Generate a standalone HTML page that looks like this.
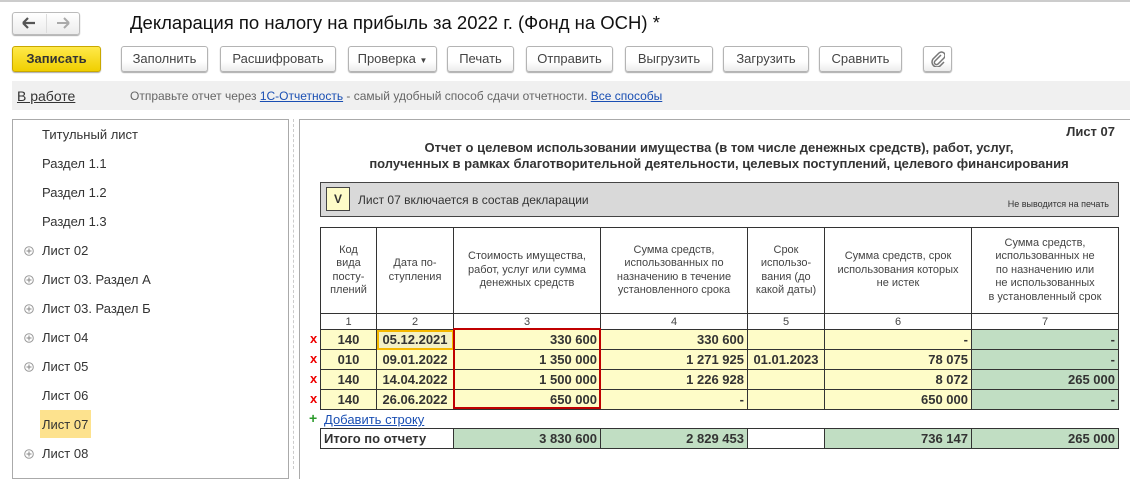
<!DOCTYPE html>
<html><head><meta charset="utf-8"><style>
*{box-sizing:border-box;margin:0;padding:0}
body{width:1130px;height:466px;overflow:hidden;background:#fff;font-family:"Liberation Sans",Arial,sans-serif;color:#333;position:relative;font-size:13px}
.a{position:absolute}
.btn{position:absolute;top:46px;height:26px;border:1px solid #b4b4b4;border-radius:3px;background:linear-gradient(#fff 60%,#ececec);box-shadow:0 1px 1px #aaa;font-size:13px;color:#444;text-align:center;line-height:24px}
.li{position:absolute;left:42px;font-size:13px;color:#333}
.pl{position:absolute;left:24px;width:10px;height:10px}
table{position:absolute;left:320px;top:227px;border-collapse:collapse;font-size:11px}
td{border:1px solid #333;text-align:center;padding:0 3px;color:#444}
.h td{height:86px;vertical-align:middle;line-height:13.5px}
.n td{height:16px}
.d td{height:20px;background:#fefcc8;font-weight:bold;font-size:13px;color:#333}
.d td.r,.t td.r{text-align:right}
.d td.g,.t td.g{background:#c1dec3}
.t td{height:20px;font-weight:bold;font-size:13px;color:#333}
.x{position:absolute;left:310px;color:#e00;font-weight:bold;font-size:13px}
</style></head><body>
<div class="a" style="left:0;top:0;width:1130px;height:2px;background:#ccc"></div>
<div class="a" style="left:12px;top:12px;width:68px;height:23px;border:1px solid #bbb;border-radius:3px;background:linear-gradient(#fff,#ececec);box-shadow:0 1px 1px #aaa"></div>
<div class="a" style="left:46px;top:14px;width:1px;height:19px;background:#ddd"></div>
<svg class="a" style="left:22px;top:17px" width="14" height="12"><path d="M1 6H13M1 6L6 1M1 6L6 11" stroke="#555" stroke-width="2.2" fill="none"/></svg>
<svg class="a" style="left:56px;top:17px" width="14" height="12"><path d="M1 6H13M13 6L8 1M13 6L8 11" stroke="#aaa" stroke-width="2" fill="none"/></svg>
<div class="a" style="left:130px;top:12px;font-size:18.5px;color:#111">Декларация по налогу на прибыль за 2022 г. (Фонд на ОСН) *</div>
<div class="btn" style="left:12px;width:89px;background:linear-gradient(#ffe94a,#f0cf00);border-color:#c9a800;color:#333;font-weight:bold">Записать</div>
<div class="btn" style="left:121px;width:87px">Заполнить</div>
<div class="btn" style="left:220px;width:116px">Расшифровать</div>
<div class="btn" style="left:348px;width:89px">Проверка <span style="font-size:8px">▼</span></div>
<div class="btn" style="left:447px;width:67px">Печать</div>
<div class="btn" style="left:526px;width:87px">Отправить</div>
<div class="btn" style="left:625px;width:88px">Выгрузить</div>
<div class="btn" style="left:723px;width:86px">Загрузить</div>
<div class="btn" style="left:819px;width:83px">Сравнить</div>
<div class="btn" style="left:923px;width:29px"><svg width="14" height="16" style="margin-top:4px"><path d="M10 4L4 10a2 2 0 0 0 3 3l6-6a3.5 3.5 0 0 0-5-5L2 8a5 5 0 0 0 7 7l4-4" stroke="#777" stroke-width="1.5" fill="none"/></svg></div>
<div class="a" style="left:12px;top:81px;width:1118px;height:29px;background:#f0f0f0"></div>
<div class="a" style="left:17px;top:88px;font-size:14px;color:#333;text-decoration:underline">В работе</div>
<div class="a" style="left:130px;top:89px;font-size:12px;color:#666">Отправьте отчет через <span style="color:#1a4fb3;text-decoration:underline">1С-Отчетность</span> - самый удобный способ сдачи отчетности. <span style="color:#1a4fb3;text-decoration:underline">Все способы</span></div>
<div class="a" style="left:12px;top:119px;width:277px;height:360px;border:1px solid #aaa"></div>
<div class="a" style="left:293px;top:119px;width:0;height:350px;border-left:1px dashed #ccc"></div>
<div class="a" style="left:299px;top:119px;width:831px;height:360px;border-top:1px solid #aaa;border-left:1px solid #aaa"></div>
<div class="li" style="top:127px">Титульный лист</div>
<div class="li" style="top:156px">Раздел 1.1</div>
<div class="li" style="top:185px">Раздел 1.2</div>
<div class="li" style="top:214px">Раздел 1.3</div>
<svg class="pl" style="top:246px"><circle cx="5" cy="5" r="4.3" stroke="#999" fill="none"/><path d="M2.5 5H7.5M5 2.5V7.5" stroke="#888"/></svg><div class="li" style="top:243px">Лист 02</div>
<svg class="pl" style="top:275px"><circle cx="5" cy="5" r="4.3" stroke="#999" fill="none"/><path d="M2.5 5H7.5M5 2.5V7.5" stroke="#888"/></svg><div class="li" style="top:272px">Лист 03. Раздел А</div>
<svg class="pl" style="top:304px"><circle cx="5" cy="5" r="4.3" stroke="#999" fill="none"/><path d="M2.5 5H7.5M5 2.5V7.5" stroke="#888"/></svg><div class="li" style="top:301px">Лист 03. Раздел Б</div>
<svg class="pl" style="top:333px"><circle cx="5" cy="5" r="4.3" stroke="#999" fill="none"/><path d="M2.5 5H7.5M5 2.5V7.5" stroke="#888"/></svg><div class="li" style="top:330px">Лист 04</div>
<svg class="pl" style="top:362px"><circle cx="5" cy="5" r="4.3" stroke="#999" fill="none"/><path d="M2.5 5H7.5M5 2.5V7.5" stroke="#888"/></svg><div class="li" style="top:359px">Лист 05</div>
<div class="li" style="top:388px">Лист 06</div>
<div class="a" style="left:40px;top:410px;width:51px;height:28px;background:#fde28e"></div>
<div class="li" style="top:417px">Лист 07</div>
<svg class="pl" style="top:449px"><circle cx="5" cy="5" r="4.3" stroke="#999" fill="none"/><path d="M2.5 5H7.5M5 2.5V7.5" stroke="#888"/></svg><div class="li" style="top:446px">Лист 08</div>
<div class="a" style="left:1000px;top:124px;width:115px;text-align:right;font-weight:bold;font-size:13px">Лист 07</div>
<div class="a" style="left:320px;top:140px;width:798px;text-align:center;font-weight:bold;font-size:13px;line-height:16px">Отчет о целевом использовании имущества (в том числе денежных средств), работ, услуг,<br>полученных в рамках благотворительной деятельности, целевых поступлений, целевого финансирования</div>
<div class="a" style="left:320px;top:182px;width:799px;height:35px;background:#d9d9d9;border:1px solid #444"></div>
<div class="a" style="left:326px;top:187px;width:24px;height:24px;background:#fefcc8;border:1px solid #444;text-align:center;line-height:22px;font-weight:bold;font-size:12px">V</div>
<div class="a" style="left:358px;top:193px;font-size:12px;color:#333">Лист 07 включается в состав декларации</div>
<div class="a" style="left:1000px;top:199px;width:109px;text-align:right;font-size:9px;color:#333">Не выводится на печать</div>
<table>
<colgroup><col style="width:56px"><col style="width:77px"><col style="width:147px"><col style="width:147px"><col style="width:77px"><col style="width:147px"><col style="width:147px"></colgroup>
<tr class="h"><td>Код<br>вида<br>посту-<br>плений</td><td>Дата по-<br>ступления</td><td>Стоимость имущества,<br>работ, услуг или сумма<br>денежных средств</td><td>Сумма средств,<br>использованных по<br>назначению в течение<br>установленного срока</td><td>Срок<br>использо-<br>вания (до<br>какой даты)</td><td>Сумма средств, срок<br>использования которых<br>не истек</td><td>Сумма средств,<br>использованных не<br>по назначению или<br>не использованных<br>в установленный срок</td></tr>
<tr class="n"><td>1</td><td>2</td><td>3</td><td>4</td><td>5</td><td>6</td><td>7</td></tr>
<tr class="d"><td>140</td><td style="outline:2px solid #f5b800;outline-offset:-2px;background:#f3f1c5">05.12.2021</td><td class="r">330 600</td><td class="r">330 600</td><td></td><td class="r">-</td><td class="r g">-</td></tr>
<tr class="d"><td>010</td><td>09.01.2022</td><td class="r">1 350 000</td><td class="r">1 271 925</td><td>01.01.2023</td><td class="r">78 075</td><td class="r g">-</td></tr>
<tr class="d"><td>140</td><td>14.04.2022</td><td class="r">1 500 000</td><td class="r">1 226 928</td><td></td><td class="r">8 072</td><td class="r g">265 000</td></tr>
<tr class="d"><td>140</td><td>26.06.2022</td><td class="r">650 000</td><td class="r">-</td><td></td><td class="r">650 000</td><td class="r g">-</td></tr>
<tr><td colspan="7" style="border:none;height:19px"></td></tr>
<tr class="t"><td colspan="2" style="text-align:left">Итого по отчету</td><td class="r g">3 830 600</td><td class="r g">2 829 453</td><td></td><td class="r g">736 147</td><td class="r g">265 000</td></tr>
</table>
<div class="a" style="left:453px;top:328px;width:148px;height:81px;border:2px solid #c00000"></div>
<div class="x" style="top:331px">x</div>
<div class="x" style="top:351px">x</div>
<div class="x" style="top:371px">x</div>
<div class="x" style="top:391px">x</div>
<div class="a" style="left:309px;top:410px;color:#2a9a2a;font-weight:bold;font-size:14px">+</div>
<div class="a" style="left:324px;top:412px;font-size:13px;color:#1a4fb3;text-decoration:underline">Добавить строку</div>
</body></html>
